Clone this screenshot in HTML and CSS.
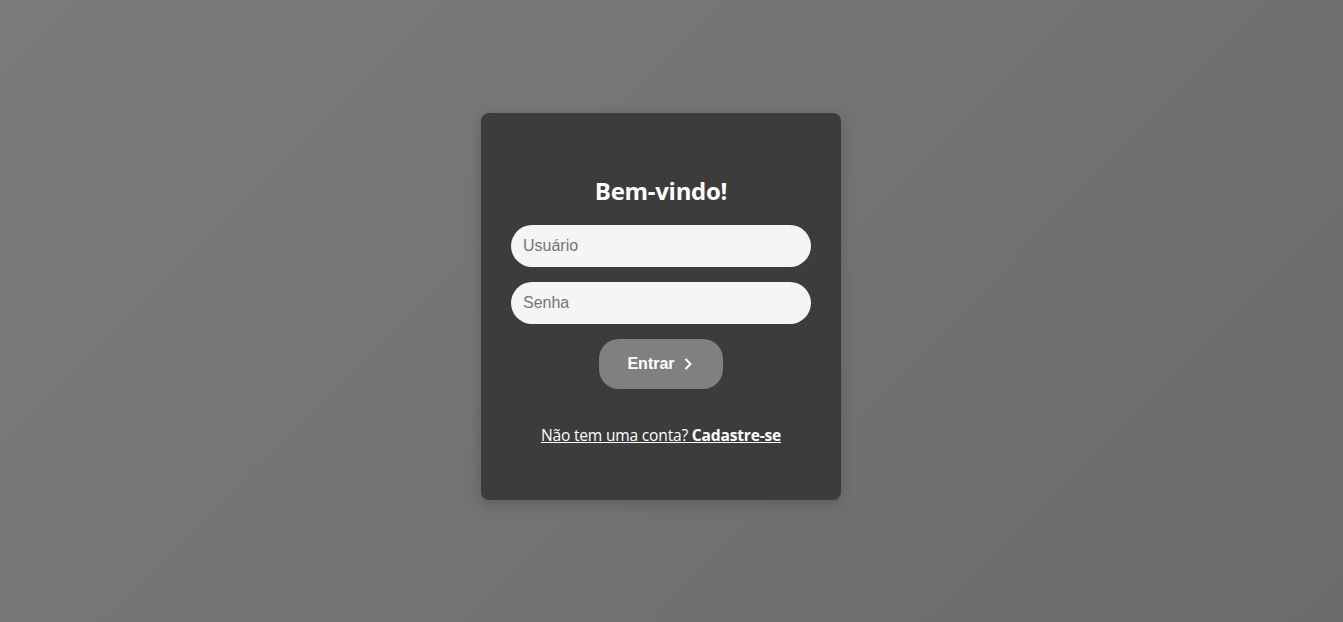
FILE: index.html
```html
<!DOCTYPE html>
<html lang="pt-BR">
<head>
<meta charset="utf-8">
<title>Login</title>
<link rel="stylesheet" href="styles.css">
</head>
<body>
<main class="page">
  <section class="card">
    <h2 class="title">Bem-vindo!</h2>
    <form class="form">
      <input class="field" type="text" placeholder="Usuário">
      <input class="field" type="password" placeholder="Senha">
      <button class="btn" type="button">Entrar
        <svg class="chev" width="10" height="12" viewBox="0 0 10 12"><path d="M3 1.5 L7.5 6 L3 10.5" fill="none" stroke="#fff" stroke-width="2" stroke-linecap="round" stroke-linejoin="round"/></svg>
      </button>
    </form>
    <a class="signup" href="#">Não tem uma conta? <strong>Cadastre-se</strong></a>
  </section>
</main>
</body>
</html>
```
FILE: styles.css
```css
html, body {
  margin: 0;
  padding: 0;
  height: 100%;
}
body {
  background: linear-gradient(135deg, #7b7b7b 0%, #6b6b6b 100%);
  font-family: "Open Sans", "Noto Sans", sans-serif;
}
.page {
  min-height: 100%;
  display: flex;
  align-items: flex-start;
  justify-content: center;
  padding: 113px 21px 0 0;
  box-sizing: border-box;
}
.card {
  width: 360px;
  height: 387px;
  box-sizing: border-box;
  background: #3c3c3c;
  border-radius: 8px;
  box-shadow: 0 4px 14px rgba(0, 0, 0, 0.18);
  padding: 62px 30px 0;
  display: flex;
  flex-direction: column;
  align-items: center;
}
.title {
  margin: 0 0 18px;
  color: #fff;
  font-size: 24px;
  font-weight: 700;
  line-height: 32px;
  letter-spacing: -0.3px;
}
.form {
  width: 100%;
  display: flex;
  flex-direction: column;
  align-items: center;
  gap: 15px;
}
.field {
  width: 100%;
  height: 42px;
  box-sizing: border-box;
  border: none;
  border-radius: 21px;
  background: #f5f5f5;
  padding: 0 12px;
  font-family: "Liberation Sans", Arial, sans-serif;
  font-size: 16px;
  color: #333;
  outline: none;
}
.field::placeholder {
  color: #757575;
}
.btn {
  width: 124px;
  height: 50px;
  border: none;
  border-radius: 20px;
  background: #808080;
  color: #fff;
  font-family: "Liberation Sans", Arial, sans-serif;
  font-weight: 700;
  font-size: 16px;
  display: flex;
  align-items: center;
  justify-content: center;
  gap: 8px;
  padding: 0 2px 0 0;
  cursor: pointer;
}
.chev {
  display: block;
}
.signup {
  margin-top: 35px;
  color: #fff;
  font-size: 15.6px;
  text-decoration: underline;
  letter-spacing: -0.2px;
}
.signup strong {
  font-weight: 700;
}
```
